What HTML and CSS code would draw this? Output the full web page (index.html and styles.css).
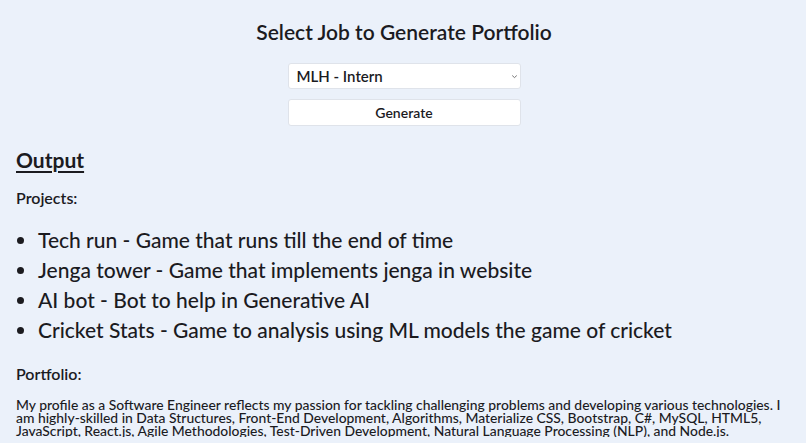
FILE: index.html
```html
<!DOCTYPE html>
<html lang="en">
<head>
<meta charset="utf-8">
<title>Select Job to Generate Portfolio</title>
<link rel="stylesheet" href="styles.css">
</head>
<body>
<main class="page">
  <section class="picker">
    <h1 class="title">Select Job to Generate Portfolio</h1>
    <div class="select">
      <span>MLH - Intern</span>
      <svg class="chev" width="7" height="5" viewBox="0 0 7 5"><path d="M1.2 1.5 L3.5 3.6 L5.8 1.5" fill="none" stroke="#666" stroke-width="0.9"/></svg>
    </div>
    <button class="btn" type="button">Generate</button>
  </section>
  <section class="output">
    <h2 class="out-title">Output</h2>
    <h3 class="label">Projects:</h3>
    <ul class="projects">
      <li>Tech run - Game that runs till the end of time</li>
      <li>Jenga tower - Game that implements jenga in website</li>
      <li>AI bot - Bot to help in Generative AI</li>
      <li>Cricket Stats - Game to analysis using ML models the game of cricket</li>
    </ul>
    <h3 class="label">Portfolio:</h3>
    <p class="para">My profile as a Software Engineer reflects my passion for tackling challenging problems and developing various technologies. I am highly-skilled in Data Structures, Front-End Development, Algorithms, Materialize CSS, Bootstrap, C#, MySQL, HTML5, JavaScript, React.js, Agile Methodologies, Test-Driven Development, Natural Language Processing (NLP), and Node.js.</p>
  </section>
</main>
</body>
</html>
```
FILE: styles.css
```css
html, body {
  margin: 0;
  padding: 0;
  background: #ebf1fa;
  color: #1b1b1f;
  font-family: "Lato", "Noto Sans", sans-serif;
}
.page {
  padding: 0 14px 0 16px;
}
.picker {
  display: flex;
  flex-direction: column;
  align-items: center;
  padding-top: 19px;
}
.title {
  margin: 0;
  font-size: 21px;
  font-weight: 600;
  line-height: 25px;
}
.select {
  margin-top: 19px;
  width: 233px;
  height: 26px;
  box-sizing: border-box;
  background: #fff;
  border: 1px solid #dfe3ea;
  border-radius: 3px;
  display: flex;
  align-items: center;
  justify-content: space-between;
  padding: 0 2px 0 8px;
  font-size: 15px;
  font-weight: 600;
}
.btn {
  margin-top: 10px;
  width: 233px;
  height: 27px;
  background: #fff;
  border: 1px solid #dfe3ea;
  border-radius: 3px;
  font-family: inherit;
  font-size: 14px;
  font-weight: 600;
  color: #1b1b1f;
  padding: 0;
}
.output {
  padding-top: 21px;
}
.out-title {
  margin: 0;
  font-size: 21px;
  font-weight: 700;
  text-decoration: underline;
  text-underline-offset: 3px;
  line-height: 25px;
}
.label {
  margin: 16px 0 0;
  font-size: 16px;
  font-weight: 600;
  line-height: 20px;
}
.projects {
  margin: 17px 0 19px;
  padding-left: 22px;
  font-size: 21px;
  font-weight: 500;
  line-height: 30px;
}
.para {
  margin: 14px 0 0;
  font-size: 13.9px;
  line-height: 13px;
  font-weight: 500;
}
```
